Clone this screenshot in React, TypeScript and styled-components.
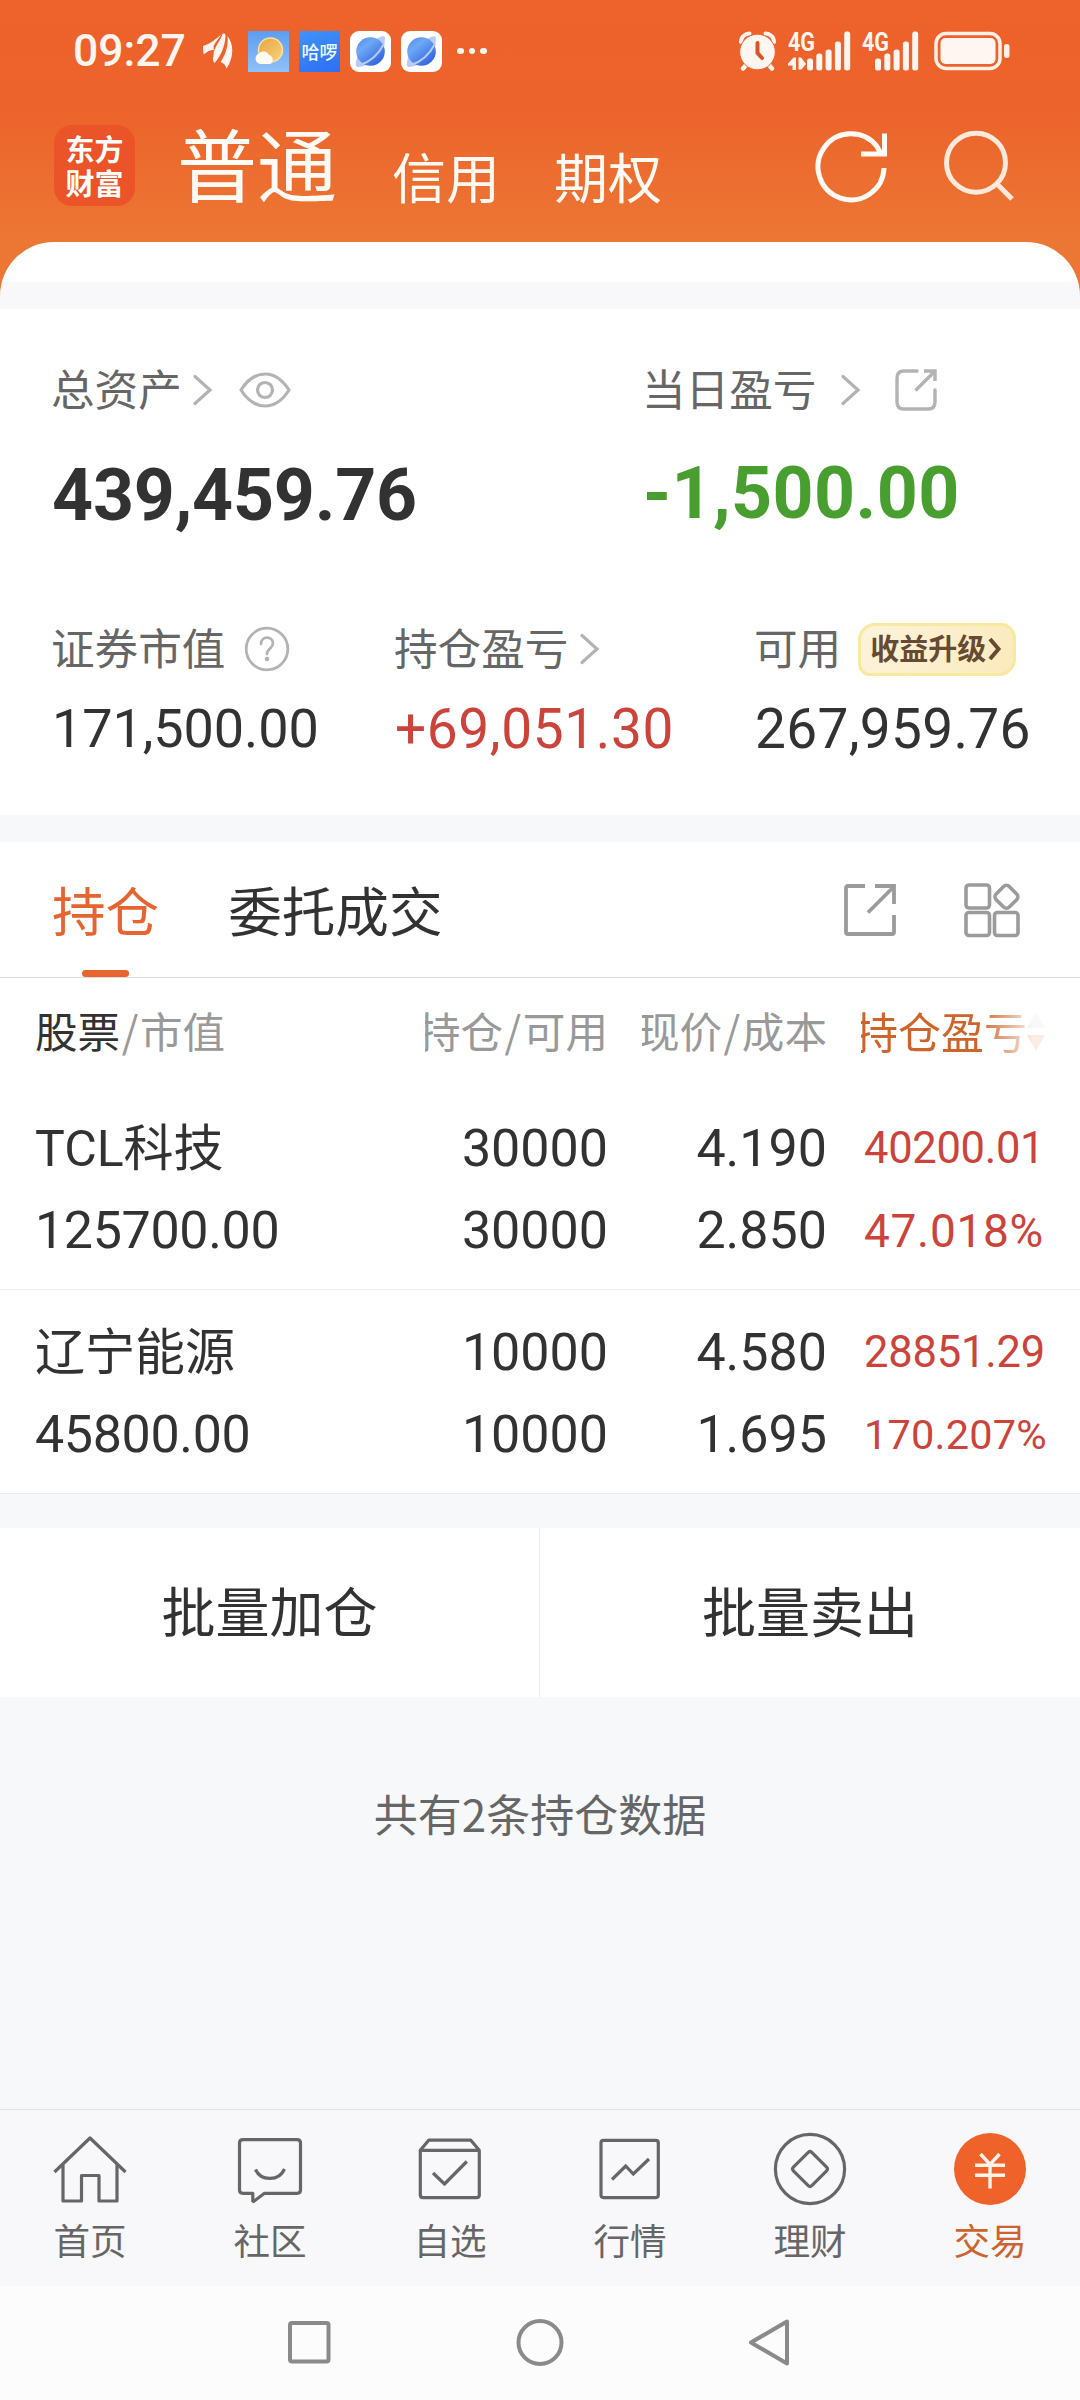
import React from "react";
import styled, { createGlobalStyle, css } from "styled-components";

const GlobalStyle = createGlobalStyle`
  *, *::before, *::after { box-sizing: border-box; }
  html, body { margin: 0; padding: 0; background: #f7f8fa; }
  body { width: 1080px; }
`;

const brand = "#ef622a";
const ink = "#323232";
const muted = "#666666";
const up = "#cb433b";
const down = "#489e2e";

/* Chinese text whose ink sits in the middle of its box */
const hanText = css`
  font-family: "Noto Sans CJK SC", "Noto Sans", sans-serif;
  line-height: 1;
  padding-bottom: 0.09em;
  white-space: nowrap;
`;

const Screen = styled.div`
  width: 1080px;
  height: 2400px;
  display: flex;
  flex-direction: column;
  overflow: hidden;
  background: #f7f8fa;
`;

/* ---------- top area ---------- */

const TopArea = styled.header`
  height: 309px;
  flex: none;
  background: linear-gradient(180deg, #ee622b 0px, #ec632b 105px, #ec7634 235px);
`;

const StatusBar = styled.div`
  height: 102px;
  padding: 0 69px 0 73px;
  display: flex;
  align-items: center;
  justify-content: space-between;
`;

const StatusGroup = styled.div`
  display: flex;
  align-items: center;
  height: 42px;
`;

const Clock = styled.span`
  font-family: Roboto, sans-serif;
  font-size: 44.5px;
  line-height: 42px;
  font-weight: 500;
  color: #fff6f1;
  width: 130px;
`;

const Swoosh = styled.svg`
  width: 30px;
  height: 36px;
  margin-right: 15px;
`;

const MiniIcon = styled.svg`
  width: 41px;
  height: 41px;
  margin-right: 10px;
`;

const HelloBadge = styled.span`
  width: 41px;
  height: 41px;
  margin-right: 10px;
  display: flex;
  align-items: center;
  justify-content: center;
  background: linear-gradient(160deg, #3f92fb, #2d6ff3);
  color: #ecfbff;
  ${hanText}
  padding-bottom: 1px;
  font-size: 18px;
  font-weight: 500;
`;

const MoreDots = styled.span`
  display: flex;
  gap: 5px;
  margin-left: 5px;
  i {
    width: 6.5px;
    height: 6.5px;
    border-radius: 50%;
    background: #fff6f1;
  }
`;

const TitleBar = styled.div`
  height: 140px;
  padding: 0 63px 0 54px;
  display: flex;
  align-items: flex-start;
`;

const Logo = styled.div`
  width: 81px;
  height: 81px;
  margin-top: 23px;
  border-radius: 18px;
  background: #eb5428;
  display: flex;
  flex-direction: column;
  align-items: center;
  justify-content: center;
  color: #fff;
  span {
    font-family: "Noto Sans CJK SC", sans-serif;
    height: 34px;
    font-size: 29px;
    line-height: 32px;
    font-weight: 700;
  }
`;

const AccountTabs = styled.nav`
  display: flex;
  align-items: flex-end;
  margin: 19px 0 0 42px;
  color: #fffaf4;
`;

const AccountTab = styled.span<{ $active?: boolean }>`
  ${hanText}
  font-size: ${(p) => (p.$active ? 80 : 54)}px;
  margin-right: ${(p) => (p.$active ? 55 : 54)}px;
`;

const HeaderActions = styled.div`
  margin: 24px 0 0 auto;
  display: flex;
  gap: 50px;
  svg {
    display: block;
    width: 76px;
    height: 80px;
  }
`;

const Sheet = styled.div`
  height: 67px;
  border-radius: 54px 54px 0 0;
  background: linear-gradient(180deg, #ffffff 0 40px, #f8f8fa 40px);
`;

/* ---------- asset summary ---------- */

const Summary = styled.section`
  height: 506px;
  flex: none;
  background: #ffffff;
  padding: 51px 0 0 52px;
`;

const TotalsGrid = styled.div`
  display: grid;
  grid-template-columns: 591px 1fr;
`;

const DetailGrid = styled.div`
  display: grid;
  grid-template-columns: 343px 360px 1fr;
  margin-top: 83px;
`;

const LabelRow = styled.div`
  height: 60px;
  display: flex;
  align-items: center;
  margin-left: -1px;
`;

const Label = styled.span`
  ${hanText}
  font-size: 43.6px;
  color: ${muted};
`;

const Icon = styled.svg<{ $w: number; $h: number; $gap?: number }>`
  flex: none;
  overflow: visible;
  width: ${(p) => p.$w}px;
  height: ${(p) => p.$h}px;
  margin-left: ${(p) => p.$gap ?? 0}px;
`;

const BigValue = styled.div<{ $color: string; $lift?: number; $track?: number }>`
  margin-top: ${(p) => 36 - (p.$lift ?? 0)}px;
  font-family: Roboto, sans-serif;
  font-size: 71.6px;
  line-height: 80px;
  font-weight: 700;
  letter-spacing: ${(p) => p.$track ?? 0}px;
  color: ${(p) => p.$color};
  white-space: nowrap;
`;

const Value = styled.div<{ $color?: string; $size?: number; $track?: number }>`
  margin-top: 20px;
  font-family: Roboto, sans-serif;
  font-size: ${(p) => p.$size ?? 54}px;
  letter-spacing: ${(p) => p.$track ?? 0}px;
  line-height: 60px;
  color: ${(p) => p.$color ?? ink};
  white-space: nowrap;
`;

const UpgradeBadge = styled.span`
  margin-left: 17px;
  width: 158px;
  height: 53px;
  display: flex;
  align-items: center;
  padding-left: 9px;
  border: 3px solid #f7e9a0;
  border-radius: 17px 15px 17px 12px;
  background: linear-gradient(110deg, #fdf3dc, #fbeabb);
  span {
    ${hanText}
    font-size: 29px;
    font-weight: 700;
    color: #664a32;
  }
`;

const Band = styled.div<{ $h: number }>`
  height: ${(p) => p.$h}px;
  flex: none;
  background: #f7f8fa;
`;

/* ---------- tabs ---------- */

const TabBar = styled.nav`
  height: 136px;
  flex: none;
  display: flex;
  align-items: stretch;
  padding: 0 59px 0 52px;
  background: #ffffff;
  border-bottom: 1px solid #dcdcdc;
`;

const Tab = styled.div<{ $active?: boolean }>`
  display: flex;
  flex-direction: column;
  align-items: center;
  justify-content: space-between;
  margin-right: 69px;
  padding-top: 40px;
  color: ${(p) => (p.$active ? "#e6642f" : ink)};
  span {
    ${hanText}
    font-size: 53.6px;
  }
  &::after {
    content: "";
    width: 47px;
    height: 7px;
    border-radius: 4px;
    background: ${(p) => (p.$active ? "#e6642f" : "transparent")};
  }
`;

const TabTools = styled.div`
  margin-left: auto;
  display: flex;
  align-items: center;
  gap: 68px;
`;

/* ---------- holdings table ---------- */

const columns = css`
  display: grid;
  grid-template-columns: 390px 183px 34px 185px 34px 200px;
  padding: 0 0 0 35px;
`;

const TableHead = styled.div`
  ${columns}
  height: 108px;
  flex: none;
  align-items: center;
  background: #ffffff;
`;

const HeadCell = styled.div<{ $col: number; $align?: string }>`
  grid-column: ${(p) => p.$col};
  display: flex;
  justify-content: ${(p) => p.$align ?? "flex-end"};
  overflow: hidden;
  span {
    ${hanText}
    line-height: 1.6;
    font-size: 42.6px;
    color: #999999;
  }
  span.strong {
    color: ${ink};
  }
`;

const Slash = styled.i`
  font-style: normal;
  padding: 0 1.5px;
`;

const SortCell = styled.div`
  grid-column: 6;
  display: flex;
  align-items: center;
  overflow: hidden;
  mask-image: linear-gradient(90deg, #000 118px, rgba(0, 0, 0, 0.12) 172px);
  span {
    ${hanText}
    line-height: 1.6;
    font-size: 43px;
    color: #cf642b;
    margin-left: -6px;
  }
`;

const HoldingRow = styled.div`
  ${columns}
  height: 204px;
  flex: none;
  padding-top: 22px;
  grid-template-rows: 82px 82px;
  background: #ffffff;
  border-bottom: 1px solid #ececec;
`;

const Cell = styled.div<{ $col: number; $name?: boolean }>`
  grid-column: ${(p) => p.$col};
  text-align: ${(p) => (p.$col === 1 ? "left" : "right")};
  font-family: Roboto, "Noto Sans CJK SC", sans-serif;
  font-size: ${(p) => (p.$name ? 50 : 52)}px;
  letter-spacing: ${(p) => (p.$col === 1 && !p.$name ? -0.35 : 0)}px;
  line-height: 82px;
  color: ${ink};
  white-space: nowrap;
`;

const ProfitCell = styled.div<{ $size: number; $track: number }>`
  grid-column: 6;
  padding-left: 3px;
  font-family: Roboto, sans-serif;
  font-size: ${(p) => p.$size}px;
  letter-spacing: ${(p) => p.$track}px;
  line-height: 82px;
  color: ${up};
  white-space: nowrap;
`;

/* ---------- batch buttons and footer ---------- */

const BatchRow = styled.div`
  display: grid;
  grid-template-columns: 540px 540px;
  height: 169px;
  flex: none;
  background: #ffffff;
`;

const BatchButton = styled.button`
  border: 0;
  border-right: 1px solid #ececec;
  background: transparent;
  color: ${ink};
  display: flex;
  align-items: center;
  justify-content: center;
  &:last-child {
    border-right: 0;
  }
  span {
    ${hanText}
    font-size: 54px;
  }
`;

const Notice = styled.div`
  flex: 1;
  display: flex;
  justify-content: center;
  align-items: flex-start;
  padding-top: 94px;
  span {
    ${hanText}
    font-size: 44px;
    color: ${muted};
  }
`;

/* ---------- bottom navigation ---------- */

const BottomNav = styled.nav`
  height: 177px;
  flex: none;
  display: grid;
  grid-template-columns: repeat(6, 1fr);
  background: #f8f8fa;
  border-top: 1px solid #e2e3e5;
`;

const NavItem = styled.div<{ $active?: boolean }>`
  display: flex;
  flex-direction: column;
  align-items: center;
  padding-top: 20px;
  svg {
    width: 80px;
    height: 80px;
  }
  span {
    ${hanText}
    margin-top: 12px;
    font-size: 36.6px;
    color: ${(p) => (p.$active ? "#cd6330" : muted)};
  }
`;

const SystemBar = styled.div`
  height: 114px;
  flex: none;
  display: flex;
  justify-content: center;
  align-items: center;
  gap: 182px;
  background: #fcfcfc;
  svg {
    width: 48px;
    height: 48px;
  }
`;

/* ---------- drawings ---------- */

const SwooshMark = () => (
  <Swoosh viewBox="0 0 30 36" fill="#fff6f1">
    <path d="M0 13 C7 11 13 6 18 1.500 C15 8 9 11 11 17 C7 16.500 3 19 1 21.500 C0 19 0 16 0 13 Z" />
    <path d="M19.500 1 C22 0 22.500 1 22.500 3 C22 13 18 23 11.500 30 C9.500 28 9.500 25 10.500 23 C10 15 17 9 19.500 1 Z" />
    <path d="M24.500 3 C31 11 31 25 23.500 35.500 C22.500 32 20.500 30 17.500 29 C23 21 25.500 12 24.500 3 Z" />
  </Swoosh>
);

const WeatherMark = () => (
  <MiniIcon viewBox="0 0 41 41">
    <defs>
      <linearGradient id="sky" x1="0" y1="0" x2="0" y2="1">
        <stop offset="0" stopColor="#5c9df0" />
        <stop offset="1" stopColor="#8fc2f8" />
      </linearGradient>
      <linearGradient id="sun" x1="0" y1="0" x2="1" y2="1">
        <stop offset="0" stopColor="#e6a444" />
        <stop offset="1" stopColor="#fbd27a" />
      </linearGradient>
    </defs>
    <rect width="41" height="41" fill="url(#sky)" />
    <circle cx="22.500" cy="19" r="12" fill="url(#sun)" stroke="#fbe0a0" strokeWidth="1.500" />
    <path d="M12 33 a5.500 5.500 0 0 1 -1 -10.500 a6 6 0 0 1 10 1.500 a5 5 0 0 1 1.500 9 Z" fill="#fffaf2" />
  </MiniIcon>
);

const PlanetMark = ({ id }: { id: string }) => (
  <MiniIcon viewBox="0 0 41 41">
    <defs>
      <linearGradient id={id} x1="0" y1="0" x2="0.8" y2="1">
        <stop offset="0" stopColor="#4f86ea" />
        <stop offset="0.35" stopColor="#6fa8f5" />
        <stop offset="1" stopColor="#2c5ee0" />
      </linearGradient>
    </defs>
    <rect width="41" height="41" rx="9" fill="#fffefe" />
    <path d="M25 9 C30 5 35 4 35 7 L34 17 Z M8 25 C5 31 5 36 8 36 C11 36 15 35 18 33 Z" fill="#bccbf4" />
    <circle cx="20.500" cy="20.500" r="14.300" fill={`url(#${id})`} />
    <path d="M34 13 C28 24 20 31 10 34" fill="none" stroke="#b4cdfb" strokeWidth="2" />
  </MiniIcon>
);

const bars = [
  { x: 0, h: 12 },
  { x: 9.3, h: 17 },
  { x: 18.6, h: 21 },
  { x: 27.9, h: 29 },
  { x: 37.2, h: 39 },
];

const Signal = ({ arrows, w, barX }: { arrows?: boolean; w: number; barX: number }) => (
  <Icon $w={w} $h={40} viewBox={`0 0 ${w} 40`} fill="#fff6f1">
    <text
      x="0"
      y="19.500"
      fontFamily="Roboto, sans-serif"
      fontWeight="700"
      fontSize="26"
      textLength="27"
      lengthAdjust="spacingAndGlyphs"
    >
      4G
    </text>
    {arrows && <path d="M0 32.500 L5.500 26.500 H8 V39 H4.500 V34.500 H0 Z M10.500 26.500 H13 L18 33 L13.500 38.500 H10.500 Z" />}
    {bars.map((b) => (
      <rect key={b.x} x={barX + b.x} y={39.5 - b.h} width="6" height={b.h} rx="2.500" />
    ))}
  </Icon>
);

const AlarmMark = () => (
  <Icon $w={37} $h={40} viewBox="0 0 37 40">
    <g stroke="#fff6f1" strokeLinecap="round" fill="none">
      <path d="M2 11 C2 6 6 2.500 10.500 2.500 M35 11 C35 6 31 2.500 26.500 2.500" strokeWidth="4" />
      <path d="M8 33 L4 37.500 M29 33 L33 37.500" strokeWidth="4.500" />
    </g>
    <circle cx="18.500" cy="21" r="17.800" fill="#fff6f1" stroke="#ee622b" strokeWidth="1" />
    <path d="M18.500 12 V22 L23 27" fill="none" stroke="#d85624" strokeWidth="4" strokeLinecap="round" />
  </Icon>
);

const BatteryMark = () => (
  <Icon $w={77} $h={40} $gap={15} viewBox="0 0 77 40">
    <rect x="2" y="2.500" width="64" height="35" rx="10" fill="none" stroke="#fff0e8" strokeWidth="3.500" />
    <rect x="6.500" y="7" width="55" height="26" rx="5" fill="#fff6f1" />
    <rect x="70" y="13" width="5.500" height="14" rx="2.700" fill="#fff0e8" />
  </Icon>
);

const Chevron = ({ gap }: { gap: number }) => (
  <Icon $w={19} $h={30} $gap={gap} viewBox="0 0 19 30">
    <path d="M2 1.500 L17 15 L2 28.500" fill="none" stroke="#b3b3b3" strokeWidth="3.200" strokeLinecap="round" />
  </Icon>
);

const EyeMark = () => (
  <Icon $w={52} $h={36} $gap={27} viewBox="0 0 52 36" fill="none" stroke="#b3b3b3" strokeWidth="3.200">
    <path d="M2 18 C9 7 17 2 26 2 C35 2 43 7 50 18 C43 29 35 34 26 34 C17 34 9 29 2 18 Z" strokeLinejoin="round" />
    <circle cx="26" cy="18" r="7.500" />
  </Icon>
);

const ShareSmall = () => (
  <Icon $w={42} $h={42} $gap={35} viewBox="0 0 42 42" fill="none" stroke="#b3b3b3" strokeWidth="3.400" strokeLinecap="round">
    <path d="M22 2 H9 Q2 2 2 9 V33 Q2 40 9 40 H33 Q40 40 40 33 V21" />
    <path d="M29 2 H40 V12 M39 3 L20.500 21.500" strokeLinecap="butt" />
  </Icon>
);

const QuestionMark = () => (
  <Icon $w={46} $h={46} $gap={19} viewBox="0 0 46 46" fill="none" stroke="#b3b3b3" strokeWidth="2.800">
    <circle cx="23" cy="23" r="20.800" />
    <path d="M17 18 C17 9.500 29 9.500 29 17.500 C29 22 23 22.500 23 28" strokeLinecap="round" />
    <circle cx="23" cy="33" r="2.300" fill="#b3b3b3" stroke="none" />
  </Icon>
);

const ShareLarge = () => (
  <Icon $w={52} $h={52} viewBox="0 0 52 52" fill="none" stroke="#9b9b9b" strokeWidth="3.800">
    <path d="M21 2 H4 Q2 2 2 4 V48 Q2 50 4 50 H48 Q50 50 50 48 V31" />
    <path d="M31 2 H50 V20 M49 3.500 L24 28.500" />
  </Icon>
);

const GridMark = () => (
  <Icon $w={57} $h={54} viewBox="0 0 57 54" fill="none" stroke="#9b9b9b" strokeWidth="3.600">
    <rect x="2" y="2" width="23.500" height="23" rx="3" />
    <rect x="2" y="29.500" width="23.500" height="23" rx="3" />
    <rect x="30.500" y="29.500" width="23.500" height="23" rx="3" />
    <rect x="33" y="4.500" width="18.500" height="18.500" rx="4" transform="rotate(45 42.250 14)" />
  </Icon>
);

const lineStyle = { fill: "none", stroke: "#666666", strokeWidth: 3.2 } as const;

const navItems = [
  {
    name: "首页",
    icon: (
      <g {...lineStyle} strokeLinejoin="round">
        <path d="M4.500 42 L40 8 L75.500 42" />
        <path d="M13 35 V71 H31.500 V45.500 H49 V71 H67 V35" />
      </g>
    ),
  },
  {
    name: "社区",
    icon: (
      <g {...lineStyle} strokeLinejoin="round">
        <path d="M13 9.600 H67 Q70.500 9.600 70.500 13 V60 Q70.500 63.300 67 63.300 H34.500 L23.500 71.500 L22.800 71 V63.300 H13 Q9.500 63.300 9.500 60 V13 Q9.500 9.600 13 9.600 Z" />
        <path d="M25.500 39.500 C31 51.500 49 51.500 54.500 39" />
      </g>
    ),
  },
  {
    name: "自选",
    icon: (
      <g {...lineStyle} strokeLinejoin="round">
        <path d="M10.300 20.300 H69.300 V65 Q69.300 67.600 66.500 67.600 H13 Q10.300 67.600 10.300 65 V20.300 L18.700 10.200 H60.800 L69.300 20.300" />
        <path d="M23 43 L34.500 54 L56.800 31.500" />
      </g>
    ),
  },
  {
    name: "行情",
    icon: (
      <g {...lineStyle}>
        <rect x="11" y="10.300" width="57.300" height="57.300" rx="2.500" />
        <path d="M22 49.500 L35.700 36 L43.300 44 L59 29" />
      </g>
    ),
  },
  {
    name: "理财",
    icon: (
      <g {...lineStyle}>
        <circle cx="40" cy="39" r="34.600" />
        <rect x="27" y="26" width="26" height="26" rx="2.500" transform="rotate(45 40 39)" />
      </g>
    ),
  },
  {
    name: "交易",
    active: true,
    icon: (
      <g fill="none" stroke="#fff3ec" strokeWidth="3.400">
        <circle cx="40" cy="39" r="36" fill={brand} stroke="none" />
        <path d="M30.500 24 L40 34.500 L49.500 24 M25 35.300 H55 M25 45.300 H55 M40 34.500 V58.500" />
      </g>
    ),
  },
];

const holdings = [
  {
    name: "TCL科技",
    value: "125700.00",
    held: "30000",
    usable: "30000",
    price: "4.190",
    cost: "2.850",
    profit: "40200.01",
    profitSize: 43.5,
    profitTrack: -0.3,
    rate: "47.018%",
    rateSize: 46,
    rateTrack: 0.7,
  },
  {
    name: "辽宁能源",
    value: "45800.00",
    held: "10000",
    usable: "10000",
    price: "4.580",
    cost: "1.695",
    profit: "28851.29",
    profitSize: 43.5,
    profitTrack: -0.2,
    rate: "170.207%",
    rateSize: 41.5,
    rateTrack: 0.2,
  },
];

export default function App() {
  return (
    <>
      <GlobalStyle />
      <Screen>
        <TopArea>
          <StatusBar>
            <StatusGroup>
              <Clock>09:27</Clock>
              <SwooshMark />
              <WeatherMark />
              <HelloBadge>哈啰</HelloBadge>
              <PlanetMark id="planet-a" />
              <PlanetMark id="planet-b" />
              <MoreDots>
                <i />
                <i />
                <i />
              </MoreDots>
            </StatusGroup>
            <StatusGroup>
              <AlarmMark />
              <Icon $w={12} $h={1} viewBox="0 0 12 1" />
              <Signal arrows w={64} barX={19} />
              <Icon $w={10} $h={1} viewBox="0 0 10 1" />
              <Signal w={57} barX={13} />
              <BatteryMark />
            </StatusGroup>
          </StatusBar>
          <TitleBar>
            <Logo>
              <span>东方</span>
              <span>财富</span>
            </Logo>
            <AccountTabs>
              <AccountTab $active>普通</AccountTab>
              <AccountTab>信用</AccountTab>
              <AccountTab>期权</AccountTab>
            </AccountTabs>
            <HeaderActions>
              <svg viewBox="0 0 76 80" fill="none" stroke="#fffaf4" strokeWidth="5">
                <path d="M69 42 A33 33 0 1 1 62 20.500 L66 28" />
                <path d="M69.500 7.500 V28 H46" />
              </svg>
              <svg viewBox="0 0 76 80" fill="none" stroke="#ffe9db" strokeWidth="5">
                <circle cx="35" cy="36.700" r="29.500" />
                <path d="M56 58 L71 73" />
              </svg>
            </HeaderActions>
          </TitleBar>
          <Sheet />
        </TopArea>

        <Summary>
          <TotalsGrid>
            <div>
              <LabelRow>
                <Label>总资产</Label>
                <Chevron gap={11} />
                <EyeMark />
              </LabelRow>
              <BigValue $color={ink} $track={-0.2}>
                439,459.76
              </BigValue>
            </div>
            <div>
              <LabelRow>
                <Label>当日盈亏</Label>
                <Chevron gap={25} />
                <ShareSmall />
              </LabelRow>
              <BigValue $color={down} $lift={2} $track={0.4}>
                -1,500.00
              </BigValue>
            </div>
          </TotalsGrid>
          <DetailGrid>
            <div>
              <LabelRow>
                <Label>证券市值</Label>
                <QuestionMark />
              </LabelRow>
              <Value $track={-0.1}>171,500.00</Value>
            </div>
            <div>
              <LabelRow>
                <Label>持仓盈亏</Label>
                <Chevron gap={12} />
              </LabelRow>
              <Value $color={up} $size={55} $track={0.6}>
                +69,051.30
              </Value>
            </div>
            <div>
              <LabelRow>
                <Label>可用</Label>
                <UpgradeBadge>
                  <span>收益升级</span>
                  <Icon $w={13} $h={24} $gap={2} viewBox="0 0 13 24">
                    <path d="M2 2 L10.500 12 L2 22" fill="none" stroke="#664a32" strokeWidth="4" />
                  </Icon>
                </UpgradeBadge>
              </LabelRow>
              <Value $size={55} $track={0.3}>
                267,959.76
              </Value>
            </div>
          </DetailGrid>
        </Summary>

        <Band $h={27} />

        <TabBar>
          <Tab $active>
            <span>持仓</span>
          </Tab>
          <Tab>
            <span>委托成交</span>
          </Tab>
          <TabTools>
            <ShareLarge />
            <GridMark />
          </TabTools>
        </TabBar>

        <TableHead>
          <HeadCell $col={1} $align="flex-start">
            <span className="strong">股票</span>
            <span>
              <Slash>/</Slash>市值
            </span>
          </HeadCell>
          <HeadCell $col={2}>
            <span>
              持仓<Slash>/</Slash>可用
            </span>
          </HeadCell>
          <HeadCell $col={4}>
            <span>
              现价<Slash>/</Slash>成本
            </span>
          </HeadCell>
          <SortCell>
            <span>持仓盈亏</span>
            <Icon $w={18} $h={40} viewBox="0 0 18 40">
              <path d="M0 16 L9 0 L18 16 Z" fill="#cccccc" />
              <path d="M0 23 H18 L9 39 Z" fill={brand} />
            </Icon>
          </SortCell>
        </TableHead>

        {holdings.map((h) => (
          <HoldingRow key={h.name}>
            <Cell $col={1} $name>
              {h.name}
            </Cell>
            <Cell $col={2}>{h.held}</Cell>
            <Cell $col={4}>{h.price}</Cell>
            <ProfitCell $size={h.profitSize} $track={h.profitTrack}>
              {h.profit}
            </ProfitCell>
            <Cell $col={1}>{h.value}</Cell>
            <Cell $col={2}>{h.usable}</Cell>
            <Cell $col={4}>{h.cost}</Cell>
            <ProfitCell $size={h.rateSize} $track={h.rateTrack}>
              {h.rate}
            </ProfitCell>
          </HoldingRow>
        ))}

        <Band $h={34} />

        <BatchRow>
          <BatchButton>
            <span>批量加仓</span>
          </BatchButton>
          <BatchButton>
            <span>批量卖出</span>
          </BatchButton>
        </BatchRow>

        <Notice>
          <span>共有2条持仓数据</span>
        </Notice>

        <BottomNav>
          {navItems.map((item) => (
            <NavItem key={item.name} $active={item.active}>
              <svg viewBox="0 0 80 80">{item.icon}</svg>
              <span>{item.name}</span>
            </NavItem>
          ))}
        </BottomNav>

        <SystemBar>
          <svg viewBox="0 0 48 48" fill="none" stroke="#8a8a8a" strokeWidth="4">
            <rect x="4" y="4" width="38.500" height="38.500" rx="2" />
          </svg>
          <svg viewBox="0 0 48 48" fill="none" stroke="#8a8a8a" strokeWidth="4">
            <circle cx="24" cy="23.500" r="21.500" />
          </svg>
          <svg viewBox="0 0 48 48" fill="none" stroke="#8a8a8a" strokeWidth="4" strokeLinejoin="round">
            <path d="M41 2.500 V44.500 L5 23.500 Z" />
          </svg>
        </SystemBar>
      </Screen>
    </>
  );
}
